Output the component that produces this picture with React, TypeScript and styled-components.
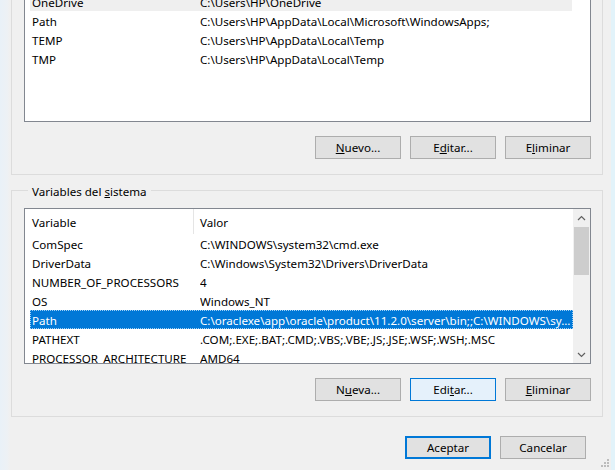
import React from 'react';
import styled, { createGlobalStyle } from 'styled-components';

const GlobalStyle = createGlobalStyle`
  html, body { margin: 0; padding: 0; background: #f0f0f0; }
  body {
    font-family: "Noto Sans", "Open Sans", sans-serif;
    font-size: 11.6px;
    color: #000;
  }
  * { box-sizing: border-box; }
`;

const Window = styled.div`
  position: relative;
  width: 615px;
  height: 470px;
  overflow: hidden;
  display: flex;
  flex-direction: column;
  padding: 0 8px 0 11px;
  border-right: 4px solid #e2f3fa;
  background: linear-gradient(to right, #e9f1f8 0, #edf1f5 7px, #f0f0f0 10px);
`;

const Group = styled.div<{ $top: number }>`
  display: flex;
  flex-direction: column;
  border: 1px solid #dcdcdc;
  margin-top: ${(p) => p.$top}px;
  padding: ${(p) => (p.$top < 0 ? 12 : 0)}px 11px 15px 12px;
`;

const GroupLabel = styled.div`
  align-self: flex-start;
  margin: -7px 0 8px 4px;
  padding: 0 4px;
  line-height: 16px;
  background: #f0f0f0;
`;

const ListBox = styled.div<{ $h: number }>`
  height: ${(p) => p.$h}px;
  border: 1px solid #828790;
  background: #fff;
  display: flex;
  overflow: hidden;
`;

const ListMain = styled.div<{ $gutter?: number }>`
  flex: 1;
  display: flex;
  flex-direction: column;
  min-width: 0;
  padding-right: ${(p) => p.$gutter ?? 0}px;
`;

const Header = styled.div`
  height: 25px;
  flex: none;
  display: flex;
  align-items: stretch;
`;

const HeaderCell = styled.div<{ $w?: number }>`
  ${(p) => (p.$w ? `width: ${p.$w}px; border-right: 1px solid #e5e5e5;` : 'flex: 1;')}
  padding-left: ${(p) => (p.$w ? 7 : 6)}px;
  padding-top: 1px;
  display: flex;
  align-items: center;
`;

const Row = styled.div<{ $sel?: boolean; $hover?: boolean }>`
  height: 19px;
  flex: none;
  margin-left: 5px;
  padding-top: 1px;
  display: flex;
  align-items: center;
  white-space: nowrap;
  background: ${(p) => (p.$sel ? '#0078d7' : p.$hover ? '#efefef' : 'transparent')};
  color: ${(p) => (p.$sel ? '#fff' : '#000')};
  outline: ${(p) => (p.$sel ? '1px dotted #9fd0f5' : 'none')};
  outline-offset: -1px;
`;

const NameCell = styled.span`
  width: 170px;
  flex: none;
  padding-left: 2px;
  overflow: hidden;
`;

const ValueCell = styled.span`
  flex: 1;
  overflow: hidden;
`;

const ScrollBar = styled.div`
  width: 17px;
  flex: none;
  background: #f0f0f0;
  display: flex;
  flex-direction: column;
`;

const ScrollBtn = styled.div`
  height: 17px;
  flex: none;
  display: flex;
  align-items: center;
  justify-content: center;
`;

const Track = styled.div`
  flex: 1;
  padding: 1px 1px 0 1px;
`;

const Thumb = styled.div`
  height: 48px;
  background: #cdcdcd;
`;

const ButtonRow = styled.div<{ $mt: number; $pr?: number }>`
  display: flex;
  justify-content: flex-end;
  gap: 9px;
  margin-top: ${(p) => p.$mt}px;
  padding-right: ${(p) => p.$pr ?? 0}px;
`;

const Button = styled.button<{ $variant?: 'default' | 'focus' | 'primary' }>`
  width: 86px;
  height: 23px;
  margin: 0;
  padding: 0;
  font: inherit;
  color: #000;
  background: ${(p) => (p.$variant === 'focus' ? '#e5f1fb' : '#e1e1e1')};
  border: ${(p) =>
    p.$variant === 'primary'
      ? '2px solid #0078d7'
      : p.$variant === 'focus'
      ? '1px solid #0078d7'
      : '1px solid #adadad'};
  line-height: 19px;
`;

const Grip = styled.svg`
  position: absolute;
  right: 2px;
  bottom: 2px;
`;

const Chevron = ({ up }: { up?: boolean }) => (
  <svg width="9" height="6" viewBox="0 0 9 6">
    <path
      d={up ? 'M1 5 L4.5 1.5 L8 5' : 'M1 1 L4.5 4.5 L8 1'}
      fill="none"
      stroke="#606060"
      strokeWidth="1.2"
    />
  </svg>
);

const userVars = [
  { n: 'OneDrive', v: 'C:\\Users\\HP\\OneDrive', hover: true },
  { n: 'Path', v: 'C:\\Users\\HP\\AppData\\Local\\Microsoft\\WindowsApps;' },
  { n: 'TEMP', v: 'C:\\Users\\HP\\AppData\\Local\\Temp' },
  { n: 'TMP', v: 'C:\\Users\\HP\\AppData\\Local\\Temp' },
];

const sysVars = [
  { n: 'ComSpec', v: 'C:\\WINDOWS\\system32\\cmd.exe' },
  { n: 'DriverData', v: 'C:\\Windows\\System32\\Drivers\\DriverData' },
  { n: 'NUMBER_OF_PROCESSORS', v: '4' },
  { n: 'OS', v: 'Windows_NT' },
  { n: 'Path', v: 'C:\\oraclexe\\app\\oracle\\product\\11.2.0\\server\\bin;;C:\\WINDOWS\\sy...', sel: true },
  { n: 'PATHEXT', v: '.COM;.EXE;.BAT;.CMD;.VBS;.VBE;.JS;.JSE;.WSF;.WSH;.MSC' },
  { n: 'PROCESSOR_ARCHITECTURE', v: 'AMD64' },
];

export default function App() {
  return (
    <>
      <GlobalStyle />
      <Window>
        <Group $top={-22}>
          <ListBox $h={131}>
            <ListMain $gutter={18}>
              {userVars.map((r) => (
                <Row key={r.n} $hover={r.hover}>
                  <NameCell>{r.n}</NameCell>
                  <ValueCell>{r.v}</ValueCell>
                </Row>
              ))}
            </ListMain>
          </ListBox>
          <ButtonRow $mt={14}>
            <Button><u>N</u>uevo...</Button>
            <Button>E<u>d</u>itar...</Button>
            <Button>E<u>l</u>iminar</Button>
          </ButtonRow>
        </Group>

        <Group $top={15}>
          <GroupLabel>Variables del <u>s</u>istema</GroupLabel>
          <ListBox $h={156}>
            <ListMain>
              <Header>
                <HeaderCell $w={169}>Variable</HeaderCell>
                <HeaderCell>Valor</HeaderCell>
              </Header>
              {sysVars.map((r) => (
                <Row key={r.n} $sel={r.sel}>
                  <NameCell>{r.n}</NameCell>
                  <ValueCell>{r.v}</ValueCell>
                </Row>
              ))}
            </ListMain>
            <ScrollBar>
              <ScrollBtn><Chevron up /></ScrollBtn>
              <Track><Thumb /></Track>
              <ScrollBtn><Chevron /></ScrollBtn>
            </ScrollBar>
          </ListBox>
          <ButtonRow $mt={14}>
            <Button>N<u>u</u>eva...</Button>
            <Button $variant="focus">Edi<u>t</u>ar...</Button>
            <Button><u>E</u>liminar</Button>
          </ButtonRow>
        </Group>

        <ButtonRow $mt={19} $pr={17}>
          <Button $variant="primary">Aceptar</Button>
          <Button>Cancelar</Button>
        </ButtonRow>

        <Grip width="10" height="10" viewBox="0 0 10 10">
          {[
            [8, 0], [8, 3], [5, 3], [8, 6], [5, 6], [2, 6],
          ].map(([x, y], i) => (
            <rect key={i} x={x} y={y + 1} width="2" height="2" fill="#bcbcbc" />
          ))}
        </Grip>
      </Window>
    </>
  );
}
